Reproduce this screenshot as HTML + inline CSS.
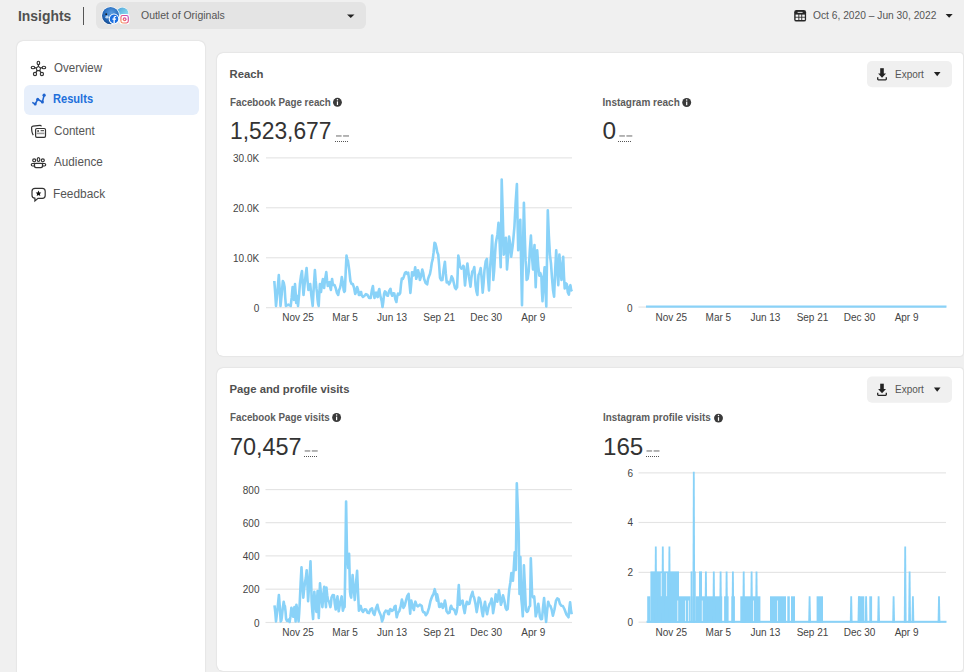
<!DOCTYPE html>
<html><head><meta charset="utf-8">
<style>
*{box-sizing:border-box;margin:0;padding:0}
html,body{width:964px;height:672px;overflow:hidden;background:#f0f0f0;font-family:"Liberation Sans",sans-serif;color:#1c1e21}
.abs{position:absolute}
.t{position:absolute;white-space:nowrap;line-height:1;z-index:3}
#sidebar{position:absolute;left:16.5px;top:40.5px;width:188.5px;height:700px;background:#fff;border-radius:6px;box-shadow:0 0 1.5px rgba(0,0,0,.2)}
.card{position:absolute;left:216.8px;width:746px;background:#fff;border-radius:6px 3px 3px 6px;box-shadow:0 0 1.5px rgba(0,0,0,.2)}
.navt{font-size:12px;color:#555;transform-origin:0 0}
.sel{position:absolute;left:23.5px;top:85.3px;width:175.5px;height:29.5px;background:#e7effb;border-radius:6px}
.h{font-size:11px;font-weight:bold;color:#505050;transform-origin:0 0}
.sub{font-size:10px;font-weight:bold;color:#5c5c5c;transform-origin:0 0}
.big{font-size:24.4px;color:#333;transform-origin:0 0}
.ax{font-size:10px;color:#444}
svg{position:absolute;left:0;top:0;z-index:2}
</style></head><body>
<div class="t" style="left:17.7px;top:7.9px;font-size:15.2px;font-weight:bold;color:#505050;transform-origin:0 0;transform:scaleX(0.915)">Insights</div>
<div class="abs" style="left:83px;top:7px;width:1px;height:18px;background:#555"></div>
<div class="abs" style="left:96px;top:2px;width:270px;height:26.6px;background:#e4e4e4;border-radius:6px"></div>
<div class="t" style="left:141px;top:9.5px;font-size:11.5px;color:#555;transform-origin:0 0;transform:scaleX(0.91)">Outlet of Originals</div>
<div class="t" style="left:812.5px;top:9.8px;font-size:11px;color:#555;transform-origin:0 0;transform:scaleX(0.93)">Oct 6, 2020 – Jun 30, 2022</div>

<div id="sidebar"></div>
<div class="sel"></div>
<div class="t navt" style="left:53.7px;top:61.7px;transform:scaleX(0.96)">Overview</div>
<div class="t navt" style="left:53.2px;top:92.9px;font-weight:bold;color:#216fdb;transform:scaleX(0.924)">Results</div>
<div class="t navt" style="left:54px;top:124.9px;transform:scaleX(0.97)">Content</div>
<div class="t navt" style="left:54px;top:155.7px;transform:scaleX(0.974)">Audience</div>
<div class="t navt" style="left:53.3px;top:187.8px;transform:scaleX(0.99)">Feedback</div>

<div class="card" style="top:52.5px;height:303.5px"></div>
<div class="card" style="top:368px;height:302.5px"></div>

<div class="t h" style="left:229.5px;top:68.7px;font-size:11.3px">Reach</div>
<div class="t sub" style="left:229.5px;top:98px;transform:scaleX(0.98)">Facebook Page reach</div>
<div class="t big" style="left:230px;top:119.1px;transform:scaleX(0.935)">1,523,677</div>
<div class="t sub" style="left:602.5px;top:98px">Instagram reach</div>
<div class="t big" style="left:602.5px;top:119.1px">0</div>

<div class="t h" style="left:229.5px;top:383.6px;font-size:11.3px">Page and profile visits</div>
<div class="t sub" style="left:229.5px;top:412.8px;transform:scaleX(0.98)">Facebook Page visits</div>
<div class="t big" style="left:230px;top:434.6px;transform:scaleX(0.96)">70,457</div>
<div class="t sub" style="left:602.5px;top:412.8px;transform:scaleX(0.985)">Instagram profile visits</div>
<div class="t big" style="left:602.5px;top:434.6px;transform:scaleX(0.99)">165</div>

<div class="t" style="left:895px;top:68.7px;font-size:10.5px;color:#555;transform-origin:0 0;transform:scaleX(0.95)">Export</div>
<div class="t" style="left:895px;top:384.2px;font-size:10.5px;color:#555;transform-origin:0 0;transform:scaleX(0.95)">Export</div>

<div class="t ax" style="left:258.0px;top:313.0px;width:80px;text-align:center">Nov 25</div>
<div class="t ax" style="left:305.1px;top:313.0px;width:80px;text-align:center">Mar 5</div>
<div class="t ax" style="left:352.1px;top:313.0px;width:80px;text-align:center">Jun 13</div>
<div class="t ax" style="left:399.2px;top:313.0px;width:80px;text-align:center">Sep 21</div>
<div class="t ax" style="left:446.2px;top:313.0px;width:80px;text-align:center">Dec 30</div>
<div class="t ax" style="left:493.3px;top:313.0px;width:80px;text-align:center">Apr 9</div>
<div class="t ax" style="left:631.3px;top:313.0px;width:80px;text-align:center">Nov 25</div>
<div class="t ax" style="left:678.4px;top:313.0px;width:80px;text-align:center">Mar 5</div>
<div class="t ax" style="left:725.4px;top:313.0px;width:80px;text-align:center">Jun 13</div>
<div class="t ax" style="left:772.5px;top:313.0px;width:80px;text-align:center">Sep 21</div>
<div class="t ax" style="left:819.5px;top:313.0px;width:80px;text-align:center">Dec 30</div>
<div class="t ax" style="left:866.6px;top:313.0px;width:80px;text-align:center">Apr 9</div>
<div class="t ax" style="left:258.0px;top:628.0px;width:80px;text-align:center">Nov 25</div>
<div class="t ax" style="left:305.1px;top:628.0px;width:80px;text-align:center">Mar 5</div>
<div class="t ax" style="left:352.1px;top:628.0px;width:80px;text-align:center">Jun 13</div>
<div class="t ax" style="left:399.2px;top:628.0px;width:80px;text-align:center">Sep 21</div>
<div class="t ax" style="left:446.2px;top:628.0px;width:80px;text-align:center">Dec 30</div>
<div class="t ax" style="left:493.3px;top:628.0px;width:80px;text-align:center">Apr 9</div>
<div class="t ax" style="left:631.3px;top:628.0px;width:80px;text-align:center">Nov 25</div>
<div class="t ax" style="left:678.4px;top:628.0px;width:80px;text-align:center">Mar 5</div>
<div class="t ax" style="left:725.4px;top:628.0px;width:80px;text-align:center">Jun 13</div>
<div class="t ax" style="left:772.5px;top:628.0px;width:80px;text-align:center">Sep 21</div>
<div class="t ax" style="left:819.5px;top:628.0px;width:80px;text-align:center">Dec 30</div>
<div class="t ax" style="left:866.6px;top:628.0px;width:80px;text-align:center">Apr 9</div>
<div class="t ax" style="left:199.2px;top:153.5px;width:60px;text-align:right">30.0K</div>
<div class="t ax" style="left:199.2px;top:203.5px;width:60px;text-align:right">20.0K</div>
<div class="t ax" style="left:199.2px;top:253.5px;width:60px;text-align:right">10.0K</div>
<div class="t ax" style="left:199.2px;top:303.5px;width:60px;text-align:right">0</div>
<div class="t ax" style="left:572.5px;top:303.5px;width:60px;text-align:right">0</div>
<div class="t ax" style="left:199.5px;top:485.5px;width:60px;text-align:right">800</div>
<div class="t ax" style="left:199.5px;top:518.5px;width:60px;text-align:right">600</div>
<div class="t ax" style="left:199.5px;top:551.8px;width:60px;text-align:right">400</div>
<div class="t ax" style="left:199.5px;top:585.0px;width:60px;text-align:right">200</div>
<div class="t ax" style="left:199.5px;top:618.5px;width:60px;text-align:right">0</div>
<div class="t ax" style="left:573.0px;top:468.8px;width:60px;text-align:right">6</div>
<div class="t ax" style="left:573.0px;top:518.3px;width:60px;text-align:right">4</div>
<div class="t ax" style="left:573.0px;top:568.0px;width:60px;text-align:right">2</div>
<div class="t ax" style="left:573.0px;top:618.0px;width:60px;text-align:right">0</div>

<svg width="964" height="672" viewBox="0 0 964 672">
<!-- header icons -->
<defs>
<linearGradient id="av2" x1="0" y1="0" x2="1" y2="1"><stop offset="0" stop-color="#4aa0d8"/><stop offset="0.6" stop-color="#7fd0ea"/><stop offset="1" stop-color="#b5e6f2"/></linearGradient>
<radialGradient id="av1" cx="0.55" cy="0.35" r="0.75"><stop offset="0" stop-color="#5d9fe0"/><stop offset="0.55" stop-color="#2a6fc0"/><stop offset="1" stop-color="#0f3f80"/></radialGradient>
<linearGradient id="ig" x1="0" y1="1" x2="1" y2="0"><stop offset="0" stop-color="#f7a35c"/><stop offset="0.5" stop-color="#e8507a"/><stop offset="1" stop-color="#b84fc9"/></linearGradient>
</defs>
<circle cx="122.4" cy="13.6" r="6.6" fill="#fff" opacity="0.8"/>
<circle cx="122.4" cy="13.6" r="6.0" fill="url(#av2)"/>
<circle cx="110.6" cy="15.7" r="9.3" fill="#fff"/>
<circle cx="110.6" cy="15.7" r="8.6" fill="url(#av1)"/>
<path d="M105 17.5 Q106 15 108 15.6 L109 17.5 Q107 19.5 105 17.5 Z" fill="#dfeefa" opacity="0.8"/>
<circle cx="106.2" cy="14.2" r="0.9" fill="#1a1a1a"/>
<circle cx="114" cy="18.9" r="5.3" fill="#fff"/>
<circle cx="114" cy="18.9" r="4.3" fill="#1a6fe0"/>
<path d="M114.8 23.2 V19.7 H116 L116.2 18.5 H114.8 V17.7 Q114.8 17.1 115.5 17.1 H116.2 V16 H115.2 Q113.5 16 113.5 17.6 V18.5 H112.4 V19.7 H113.5 V23.2 Z" fill="#fff"/>
<rect x="119.5" y="14.1" width="10.1" height="10.2" rx="2.6" fill="#fff"/>
<rect x="120.9" y="15.5" width="7.4" height="7.5" rx="1.9" fill="none" stroke="url(#ig)" stroke-width="1.15"/>
<circle cx="124.6" cy="19.25" r="1.9" fill="url(#ig)"/>
<circle cx="124.6" cy="19.25" r="0.75" fill="#fff"/>
<polygon points="347,14.4 354.5,14.4 350.75,18" fill="#222"/>
<!-- calendar -->
<rect x="794.2" y="10" width="11.9" height="11.6" rx="2.2" fill="#262626"/>
<rect x="797.6" y="11.9" width="5" height="1" fill="#ddd"/>
<rect x="795.6" y="14.6" width="2.8" height="2.2" fill="#f4f4f4"/><rect x="799.3" y="14.6" width="2" height="2.2" fill="#f4f4f4"/><rect x="802.2" y="14.6" width="2.6" height="2.2" fill="#f4f4f4"/>
<rect x="795.6" y="17.6" width="2.8" height="2.4" fill="#f4f4f4"/><rect x="799.3" y="17.6" width="2" height="2.4" fill="#f4f4f4"/><rect x="802.2" y="17.6" width="2.6" height="2.4" fill="#f4f4f4"/>
<polygon points="945.6,13.9 952.7,13.9 949.15,17.8" fill="#222"/>
<!-- nav icons -->
<g fill="none" stroke="#333" stroke-width="1.15">
<polygon points="38.4,66.4 40.6,68 39.8,70.6 37,70.6 36.2,68"/>
<line x1="38.4" y1="66.4" x2="38.4" y2="64.6"/><line x1="40.6" y1="68" x2="42.4" y2="67.6"/><line x1="36.2" y1="68" x2="34.5" y2="67.6"/><line x1="39.8" y1="70.6" x2="40.9" y2="72.6"/><line x1="37" y1="70.6" x2="35.9" y2="72.6"/>
<ellipse cx="38.4" cy="62.9" rx="1.3" ry="1.7"/><ellipse cx="33" cy="67.5" rx="1.8" ry="1.3"/><ellipse cx="43.9" cy="67.5" rx="1.8" ry="1.3"/><circle cx="35" cy="74" r="1.6"/><circle cx="41.9" cy="74" r="1.6"/>
</g>
<g>
<polyline points="32.3,102.4 35.2,104.1 37.7,99.3 42.4,102 44.1,95.2" fill="none" stroke="#1f64cf" stroke-width="1.5"/>
<circle cx="35.2" cy="104.1" r="1.5" fill="#1f64cf"/><circle cx="37.7" cy="99.3" r="1.5" fill="#1f64cf"/><circle cx="42.4" cy="102" r="1.5" fill="#1f64cf"/><circle cx="44.1" cy="95.2" r="1.6" fill="#1f64cf"/>
</g>
<g fill="none" stroke="#333" stroke-width="1.2">
<path d="M33.3 135.2 Q31.6 133 31.6 127.6 Q31.6 126.4 33 126.2 L40 125.4 Q41.2 125.3 41.4 126.4"/>
<rect x="35.6" y="128.5" width="9.9" height="8.8" rx="1.3"/>
</g>
<circle cx="38.1" cy="131" r="0.9" fill="#333"/><rect x="40.6" y="130.2" width="3.4" height="1" fill="#333"/><rect x="36.6" y="132.6" width="7.8" height="1.6" fill="#999"/>
<g fill="none" stroke="#333" stroke-width="1.2">
<circle cx="34.2" cy="160.3" r="1.5"/><ellipse cx="38.5" cy="159.6" rx="1.3" ry="1.9"/><circle cx="42.8" cy="160.3" r="1.5"/>
<path d="M35.5 163.5 H32.5 Q31.3 163.5 31.3 164.8 Q31.3 166 32.5 166 H35.2"/>
<path d="M41.5 163.5 H44.5 Q45.7 163.5 45.7 164.8 Q45.7 166 44.5 166 H41.8"/>
<path d="M35.8 163.4 H41.2 Q42.7 163.4 42.7 165 Q42.7 167.6 41 167.6 H36 Q34.3 167.6 34.3 165 Q34.3 163.4 35.8 163.4 Z"/>
</g>
<g fill="none" stroke="#333" stroke-width="1.2">
<path d="M35 188.3 H42.3 Q45.2 188.3 45.2 191.2 V195.5 Q45.2 198.3 42.3 198.3 H38 L34.9 201 V198.2 Q32 198 32 195.3 V191.2 Q32 188.3 35 188.3 Z"/>
</g>
<polygon points="38.5,190.6 39.4,192.4 41.3,192.6 39.9,193.9 40.3,195.9 38.5,194.9 36.7,195.9 37.1,193.9 35.7,192.6 37.6,192.4" fill="#111"/>

<rect x="266" y="157.3" width="306" height="1.15" fill="#e4e4e4"/>
<rect x="266" y="207.2" width="306" height="1.15" fill="#e4e4e4"/>
<rect x="266" y="257.2" width="306" height="1.15" fill="#e4e4e4"/>
<rect x="266" y="307.1" width="306" height="1.15" fill="#e4e4e4"/>
<rect x="638.5" y="306.5" width="307.5" height="1.15" fill="#e4e4e4"/>
<rect x="265.5" y="489" width="306.5" height="1.15" fill="#e4e4e4"/>
<rect x="265.5" y="522.1" width="306.5" height="1.15" fill="#e4e4e4"/>
<rect x="265.5" y="555.3" width="306.5" height="1.15" fill="#e4e4e4"/>
<rect x="265.5" y="588.6" width="306.5" height="1.15" fill="#e4e4e4"/>
<rect x="265.5" y="621.9" width="306.5" height="1.15" fill="#e4e4e4"/>
<rect x="638.5" y="472.3" width="307.5" height="1.15" fill="#e4e4e4"/>
<rect x="638.5" y="521.9" width="307.5" height="1.15" fill="#e4e4e4"/>
<rect x="638.5" y="571.8" width="307.5" height="1.15" fill="#e4e4e4"/>
<rect x="638.5" y="621.6" width="307.5" height="1.15" fill="#e4e4e4"/>
<polyline points="274.30,281.00 275.15,292.10 276.00,306.00 277.40,291.90 278.80,275.00 279.65,289.10 280.50,306.00 281.65,294.90 282.80,281.00 283.70,282.60 284.60,287.00 285.25,297.90 285.90,306.00 288.30,304.60 290.70,306.00 291.65,297.90 292.60,287.00 293.30,292.10 294.00,300.00 294.50,293.40 295.00,284.00 295.60,292.10 296.20,303.00 296.80,300.90 297.40,296.00 297.70,299.60 298.00,306.00 298.95,296.40 299.90,284.00 300.95,276.10 302.00,271.00 302.75,284.40 303.50,295.00 305.05,280.10 306.60,268.00 307.50,280.40 308.40,290.00 309.30,285.60 310.20,284.00 311.45,296.40 312.70,306.00 313.80,286.60 314.90,270.00 315.70,280.90 316.50,289.00 317.00,292.60 317.50,299.00 318.10,303.90 318.70,306.00 319.30,293.60 319.90,284.00 320.45,289.40 321.00,292.00 321.95,284.10 322.90,279.00 323.50,284.90 324.10,288.00 325.20,278.60 326.30,272.00 327.05,280.40 327.80,286.00 328.70,282.60 329.60,282.00 330.25,287.40 330.90,290.00 331.50,283.10 332.10,279.00 332.70,283.40 333.30,285.00 334.50,285.10 335.70,288.00 336.95,292.90 338.20,295.00 339.10,290.10 340.00,288.00 340.90,283.90 341.80,277.00 342.75,282.10 343.70,290.00 344.30,291.90 344.90,291.00 345.70,271.90 346.50,255.60 347.20,259.45 347.90,260.50 349.15,269.35 350.40,281.00 351.60,283.90 352.80,284.00 354.00,287.60 355.20,294.00 356.15,291.90 357.10,287.00 358.00,289.60 358.90,295.00 359.80,294.90 360.70,292.00 361.15,292.10 361.60,295.00 362.95,296.90 364.30,296.00 365.90,294.10 367.50,295.00 369.10,297.90 370.70,298.00 371.80,290.60 372.90,286.00 373.70,293.40 374.50,298.00 375.30,293.85 376.10,292.50 376.90,296.15 377.70,297.00 378.50,291.60 379.30,289.00 380.10,294.90 380.90,298.00 381.70,301.10 382.50,307.00 383.30,301.70 384.10,293.60 384.90,291.40 385.70,292.00 386.80,295.25 387.90,295.70 389.20,290.85 390.50,288.80 391.35,293.65 392.20,295.70 393.25,293.25 394.30,293.60 395.35,299.20 396.40,302.00 397.20,296.40 398.00,293.60 399.10,294.70 400.20,293.00 401.00,284.40 401.80,278.60 402.85,278.90 403.90,276.40 405.00,272.90 406.10,272.20 407.15,273.85 408.20,272.70 409.30,281.45 410.40,293.00 411.20,284.00 412.00,272.20 412.80,272.40 413.60,275.40 414.40,272.75 415.20,267.30 415.70,271.65 416.20,278.80 417.10,275.90 418.00,270.20 418.95,273.70 419.90,280.00 421.10,276.20 422.30,269.60 423.20,272.80 424.10,278.80 425.65,282.95 427.20,284.30 428.10,278.90 429.00,276.30 429.95,274.05 430.90,269.00 431.80,262.75 432.70,259.30 433.60,252.45 434.50,242.80 435.40,243.55 436.30,247.10 437.25,252.15 438.20,254.40 439.10,264.60 440.00,277.60 441.20,280.20 442.40,280.00 443.65,269.45 444.90,261.70 445.80,273.45 446.70,282.40 447.90,281.95 449.10,284.30 450.35,281.70 451.60,276.30 452.80,278.60 454.00,283.70 454.95,287.80 455.90,289.10 456.50,286.80 457.10,287.30 457.70,272.85 458.30,255.60 459.20,259.70 460.10,266.60 461.35,268.60 462.60,267.80 463.20,265.80 463.80,266.60 464.40,277.45 465.00,285.50 466.20,273.10 467.40,263.50 468.95,276.50 470.50,286.70 471.40,277.70 472.30,271.50 473.30,270.65 474.30,267.00 474.90,274.60 475.50,285.00 476.45,291.40 477.40,295.00 477.95,283.60 478.50,275.00 479.60,272.90 480.70,268.00 481.70,278.90 482.70,292.60 483.60,282.70 484.50,270.00 485.70,261.32 486.90,258.80 487.95,277.73 489.00,290.50 489.75,273.17 490.50,262.00 491.35,251.83 492.20,235.50 492.75,254.67 493.30,280.00 494.15,270.58 495.00,255.00 495.70,244.32 496.40,239.80 497.45,234.43 498.50,222.90 499.60,242.02 500.70,267.30 501.20,226.48 501.70,179.50 502.75,213.97 503.80,254.60 504.85,249.23 505.90,237.70 506.45,250.47 507.00,269.40 508.05,256.08 509.10,236.60 510.15,243.57 511.20,256.70 512.80,244.93 514.40,227.00 515.65,202.42 516.90,184.00 517.55,220.23 518.20,250.30 519.25,231.92 520.30,219.70 521.15,265.58 522.00,305.30 522.95,250.97 523.90,202.80 524.75,234.93 525.60,260.90 526.10,267.37 526.60,280.00 527.65,278.83 528.70,271.50 529.80,250.42 530.90,235.50 531.95,255.53 533.00,269.40 533.75,254.12 534.50,245.00 535.10,269.23 535.70,287.30 536.45,265.72 537.20,250.30 538.25,266.08 539.30,275.70 540.35,273.17 541.40,276.80 541.95,292.03 542.50,301.10 543.55,281.12 544.60,267.30 545.45,289.93 546.30,306.40 547.05,255.22 547.80,210.20 548.85,235.48 549.90,254.60 550.95,263.12 552.00,277.80 553.05,290.38 554.10,296.80 555.15,270.47 556.20,250.30 557.25,270.83 558.30,285.20 558.85,266.82 559.40,254.60 560.45,270.38 561.50,280.00 562.35,265.27 563.20,256.70 563.95,275.63 564.70,288.40 565.75,283.22 566.80,284.20 567.85,292.53 568.90,294.70 569.65,286.87 570.40,285.20 571.25,290.38 572.10,289.40" fill="none" stroke="#89d2f8" stroke-width="2.6" stroke-linejoin="round"/>
<rect x="646" y="305.5" width="300.5" height="2.2" fill="#89d2f8"/>
<polyline points="274.50,605.40 275.25,612.00 276.00,621.40 277.45,609.60 278.90,595.00 279.80,606.80 280.70,621.40 281.30,620.45 281.90,616.70 282.80,607.85 283.70,601.80 284.30,605.30 284.90,606.00 285.50,611.10 286.10,619.00 287.00,621.00 287.90,620.20 288.75,619.70 289.60,622.00 290.50,616.25 291.40,607.70 292.30,610.80 293.20,616.70 293.80,613.30 294.40,607.10 295.00,612.85 295.60,621.40 296.00,614.50 296.40,604.80 297.50,611.70 298.60,621.40 299.20,612.70 299.80,601.20 300.65,582.85 301.50,567.30 302.40,583.85 303.30,597.60 304.20,588.45 305.10,582.10 305.90,577.55 306.70,570.20 307.40,584.30 308.10,601.20 309.30,582.65 310.50,561.30 311.10,580.45 311.70,602.40 312.40,612.10 313.10,619.00 313.70,603.95 314.30,591.70 315.35,603.20 316.40,611.90 317.00,600.10 317.60,591.10 318.20,605.90 318.80,617.90 319.40,599.20 320.00,583.30 321.20,596.60 322.40,607.10 323.30,595.60 324.20,586.90 325.10,598.40 326.00,607.10 326.20,595.90 326.40,587.50 327.20,595.15 328.00,600.00 329.20,602.15 330.40,607.10 330.95,603.75 331.50,597.60 332.70,595.00 333.90,595.20 334.80,603.75 335.70,609.50 336.60,601.55 337.50,596.40 338.10,605.25 338.70,611.30 340.20,602.45 341.70,596.40 342.30,604.95 342.90,610.70 343.75,607.50 344.60,607.10 345.00,584.95 345.40,560.00 345.75,529.35 346.10,501.50 346.55,529.00 347.00,553.70 347.60,559.40 348.20,567.90 348.65,562.20 349.10,553.70 349.55,571.30 350.00,591.70 350.60,596.05 351.20,597.60 351.90,584.90 352.60,575.00 353.70,588.90 354.80,600.00 355.95,584.00 357.10,570.80 358.00,592.15 358.90,610.70 359.80,606.95 360.70,606.00 361.90,610.35 363.10,611.90 364.60,609.30 366.10,609.50 367.55,612.70 369.00,613.10 370.50,609.30 372.00,608.30 373.20,613.00 374.40,614.90 375.90,608.45 377.40,604.80 378.60,610.35 379.80,613.10 380.95,615.85 382.10,621.40 383.15,618.65 384.20,613.10 385.75,610.65 387.30,611.00 388.10,614.00 388.90,614.20 389.65,610.20 390.40,609.00 391.95,610.90 393.50,610.00 394.55,606.50 395.60,605.80 396.15,612.95 396.70,617.30 398.00,612.75 399.30,611.00 400.60,606.70 401.90,599.60 402.65,602.35 403.40,607.90 404.70,605.65 406.00,600.60 407.30,595.85 408.60,593.90 409.40,605.15 410.20,613.60 410.75,605.70 411.30,600.60 412.60,606.70 413.90,610.00 414.65,604.45 415.40,601.70 416.70,605.45 418.00,606.40 419.85,604.70 421.70,605.80 422.45,610.35 423.20,612.10 424.50,612.25 425.80,615.20 427.40,612.95 429.00,607.90 430.55,600.80 432.10,596.50 433.40,594.25 434.70,589.20 435.75,593.50 436.80,600.60 436.95,598.90 437.10,594.40 438.15,599.25 439.20,606.90 440.25,606.70 441.30,603.70 442.05,604.40 442.80,607.90 443.85,605.65 444.90,600.60 445.70,604.40 446.50,611.00 448.05,613.20 449.60,612.60 450.35,607.80 451.10,605.80 452.15,608.80 453.20,609.00 454.50,610.20 455.80,614.20 456.60,611.95 457.40,606.90 458.10,594.55 458.80,585.00 459.40,596.30 460.00,604.80 461.30,601.30 462.60,600.60 463.65,608.25 464.70,613.10 465.75,606.00 466.80,601.70 468.10,604.10 469.40,603.70 470.95,596.35 472.50,591.80 473.30,596.05 474.10,597.50 475.40,603.40 476.70,612.10 477.75,606.20 478.80,597.50 479.80,598.70 480.80,602.70 481.85,610.90 482.90,616.30 483.95,607.60 485.00,601.70 486.05,609.35 487.10,614.20 488.40,607.55 489.70,603.70 490.65,602.50 491.60,598.50 492.35,604.40 493.10,613.10 494.40,605.15 495.70,594.40 496.50,596.65 497.30,601.70 498.10,597.35 498.90,590.20 499.90,596.10 500.90,604.80 501.95,601.50 503.00,595.40 504.30,600.25 505.60,607.90 506.65,609.85 507.70,609.00 508.50,597.70 509.30,589.20 510.35,582.50 511.40,573.00 512.15,575.50 512.90,580.80 513.80,567.95 514.70,552.30 515.25,559.75 515.80,570.00 516.30,528.05 516.80,483.30 517.75,507.00 518.70,533.50 519.10,565.15 519.50,594.00 519.95,574.10 520.40,557.00 520.85,579.15 521.30,598.50 522.05,606.00 522.80,616.30 523.35,592.15 523.90,565.20 524.90,586.20 525.90,610.00 526.95,611.90 528.00,611.00 529.05,607.00 530.10,605.80 530.45,583.45 530.80,558.30 531.45,575.45 532.10,595.40 533.15,597.35 534.20,596.50 534.95,605.00 535.70,616.30 537.00,611.40 538.30,603.70 539.10,608.85 539.90,616.80 540.95,619.25 542.00,618.90 543.05,607.05 544.10,598.00 545.10,611.40 546.10,622.00 547.15,610.45 548.20,601.70 549.25,605.15 550.30,605.80 551.60,609.35 552.90,615.70 554.45,609.55 556.00,600.60 557.30,598.45 558.60,599.10 559.95,603.85 561.30,605.80 562.85,606.00 564.40,609.00 566.45,614.55 568.50,617.30 569.30,608.35 570.10,602.20 570.90,609.60 571.70,614.20" fill="none" stroke="#89d2f8" stroke-width="2.6" stroke-linejoin="round"/>
<rect x="646.5" y="620.8" width="300" height="2" fill="#89d2f8"/>
<rect x="647.2" y="596.3" width="3.2" height="26.5" fill="#89d2f8"/>
<rect x="650.4" y="571.4" width="28.6" height="51.4" fill="#89d2f8"/>
<rect x="679" y="596.3" width="11.6" height="26.5" fill="#89d2f8"/>
<rect x="690.6" y="571.4" width="1.9" height="51.4" fill="#89d2f8"/>
<rect x="692.5" y="596.3" width="1.9" height="26.5" fill="#89d2f8"/>
<rect x="694.4" y="571.4" width="1.3" height="51.4" fill="#89d2f8"/>
<rect x="695.7" y="596.3" width="3.3" height="26.5" fill="#89d2f8"/>
<rect x="699" y="571.4" width="3.0" height="51.4" fill="#89d2f8"/>
<rect x="702" y="596.3" width="20.2" height="26.5" fill="#89d2f8"/>
<rect x="724.1" y="596.3" width="4.5" height="26.5" fill="#89d2f8"/>
<rect x="731.4" y="596.3" width="3.5" height="26.5" fill="#89d2f8"/>
<rect x="740.3" y="596.3" width="20.1" height="26.5" fill="#89d2f8"/>
<rect x="770" y="596.3" width="16.0" height="26.5" fill="#89d2f8"/>
<rect x="787.3" y="596.3" width="2.5" height="26.5" fill="#89d2f8"/>
<rect x="791" y="596.3" width="4.0" height="26.5" fill="#89d2f8"/>
<rect x="816.6" y="596.3" width="6.4" height="26.5" fill="#89d2f8"/>
<rect x="858.6" y="596.3" width="5.7" height="26.5" fill="#89d2f8"/>
<rect x="869.3" y="596.3" width="2.8" height="26.5" fill="#89d2f8"/>
<polygon points="654.4,622.8 654.90,546.5 656.70,546.5 657.2,622.8" fill="#89d2f8"/>
<polygon points="661.4,622.8 661.90,546.5 663.70,546.5 664.2,622.8" fill="#89d2f8"/>
<polygon points="668.0,622.8 668.50,546.5 670.30,546.5 670.8,622.8" fill="#89d2f8"/>
<polygon points="692.4,622.8 692.90,471.8 694.70,471.8 695.2,622.8" fill="#89d2f8"/>
<polygon points="704.5,622.8 705.00,571.4 706.80,571.4 707.3,622.8" fill="#89d2f8"/>
<polygon points="712.4,622.8 712.90,571.4 714.70,571.4 715.2,622.8" fill="#89d2f8"/>
<polygon points="719.2,622.8 719.70,571.4 721.50,571.4 722.0,622.8" fill="#89d2f8"/>
<polygon points="725.2,622.8 725.70,571.4 727.50,571.4 728.0,622.8" fill="#89d2f8"/>
<polygon points="731.5,622.8 732.00,571.4 733.80,571.4 734.3,622.8" fill="#89d2f8"/>
<polygon points="742.3,622.8 742.80,571.4 744.60,571.4 745.1,622.8" fill="#89d2f8"/>
<polygon points="750.2,622.8 750.70,571.4 752.50,571.4 753.0,622.8" fill="#89d2f8"/>
<polygon points="755.1,622.8 755.60,571.4 757.40,571.4 757.9,622.8" fill="#89d2f8"/>
<polygon points="808.2,622.8 808.70,596.3 810.50,596.3 811.0,622.8" fill="#89d2f8"/>
<polygon points="849.8,622.8 850.30,596.3 852.10,596.3 852.6,622.8" fill="#89d2f8"/>
<polygon points="857.5,622.8 858.00,596.3 859.80,596.3 860.3,622.8" fill="#89d2f8"/>
<polygon points="864.7,622.8 865.20,596.3 867.00,596.3 867.5,622.8" fill="#89d2f8"/>
<polygon points="877.2,622.8 877.70,596.3 879.50,596.3 880.0,622.8" fill="#89d2f8"/>
<polygon points="892.2,622.8 892.70,596.3 894.50,596.3 895.0,622.8" fill="#89d2f8"/>
<polygon points="903.8,622.8 904.30,546.5 906.10,546.5 906.6,622.8" fill="#89d2f8"/>
<polygon points="908.2,622.8 908.70,571.4 910.50,571.4 911.0,622.8" fill="#89d2f8"/>
<polygon points="911.5,622.8 912.00,596.3 913.80,596.3 914.3,622.8" fill="#89d2f8"/>
<polygon points="937.6,622.8 938.10,596.3 939.90,596.3 940.4,622.8" fill="#89d2f8"/>
<rect x="660.85" y="573.1" width="0.7" height="23.1" fill="#fff"/>
<rect x="666.35" y="573.1" width="0.7" height="23.1" fill="#fff"/>
<rect x="677.45" y="600.5" width="0.7" height="20.6" fill="#fff"/>
<rect x="685.15" y="600.5" width="0.7" height="20.6" fill="#fff"/>
<rect x="688.35" y="600.5" width="0.7" height="20.6" fill="#fff"/>
<rect x="701.85" y="600.5" width="0.7" height="20.6" fill="#fff"/>
<rect x="753.25" y="600.5" width="0.7" height="20.6" fill="#fff"/>
<rect x="777.25" y="600.5" width="0.7" height="20.6" fill="#fff"/>
<circle cx="337.45" cy="102.3" r="4.45" fill="#3a3a3a"/><circle cx="337.45" cy="99.70" r="0.75" fill="#fff"/><rect x="336.85" y="101.40" width="1.2" height="3.6" fill="#fff"/>
<circle cx="686.7" cy="102.5" r="4.45" fill="#3a3a3a"/><circle cx="686.7" cy="99.90" r="0.75" fill="#fff"/><rect x="686.10" y="101.60" width="1.2" height="3.6" fill="#fff"/>
<circle cx="336.6" cy="417.5" r="4.45" fill="#3a3a3a"/><circle cx="336.6" cy="414.90" r="0.75" fill="#fff"/><rect x="336.00" y="416.60" width="1.2" height="3.6" fill="#fff"/>
<circle cx="718.5" cy="418.1" r="4.45" fill="#3a3a3a"/><circle cx="718.5" cy="415.50" r="0.75" fill="#fff"/><rect x="717.90" y="417.20" width="1.2" height="3.6" fill="#fff"/>
<rect x="336" y="135.1" width="5.6" height="1.7" fill="#a8a8a8"/><rect x="343.1" y="135.1" width="5.9" height="1.7" fill="#a8a8a8"/><rect x="335" y="141" width="1" height="1" fill="#555"/><rect x="337" y="141" width="1" height="1" fill="#555"/><rect x="339" y="141" width="1" height="1" fill="#555"/><rect x="341" y="141" width="1" height="1" fill="#555"/><rect x="343" y="141" width="1" height="1" fill="#555"/><rect x="345" y="141" width="1" height="1" fill="#555"/><rect x="347" y="141" width="1" height="1" fill="#555"/>
<rect x="619.3" y="135.1" width="5.6" height="1.7" fill="#a8a8a8"/><rect x="626.4" y="135.1" width="5.9" height="1.7" fill="#a8a8a8"/><rect x="618" y="141" width="1" height="1" fill="#555"/><rect x="620" y="141" width="1" height="1" fill="#555"/><rect x="622" y="141" width="1" height="1" fill="#555"/><rect x="624" y="141" width="1" height="1" fill="#555"/><rect x="626" y="141" width="1" height="1" fill="#555"/><rect x="628" y="141" width="1" height="1" fill="#555"/><rect x="630" y="141" width="1" height="1" fill="#555"/>
<rect x="304.7" y="450.1" width="5.6" height="1.7" fill="#a8a8a8"/><rect x="311.8" y="450.1" width="5.9" height="1.7" fill="#a8a8a8"/><rect x="304" y="456" width="1" height="1" fill="#555"/><rect x="306" y="456" width="1" height="1" fill="#555"/><rect x="308" y="456" width="1" height="1" fill="#555"/><rect x="310" y="456" width="1" height="1" fill="#555"/><rect x="312" y="456" width="1" height="1" fill="#555"/><rect x="314" y="456" width="1" height="1" fill="#555"/><rect x="316" y="456" width="1" height="1" fill="#555"/>
<rect x="646.5" y="450.1" width="5.6" height="1.7" fill="#a8a8a8"/><rect x="653.6" y="450.1" width="5.9" height="1.7" fill="#a8a8a8"/><rect x="646" y="456" width="1" height="1" fill="#555"/><rect x="648" y="456" width="1" height="1" fill="#555"/><rect x="650" y="456" width="1" height="1" fill="#555"/><rect x="652" y="456" width="1" height="1" fill="#555"/><rect x="654" y="456" width="1" height="1" fill="#555"/><rect x="656" y="456" width="1" height="1" fill="#555"/><rect x="658" y="456" width="1" height="1" fill="#555"/>
<rect x="867" y="61" width="85" height="26.3" rx="5" fill="#f0f0f0"/><rect x="880.2" y="68.2" width="3.6" height="5.8" fill="#222"/><polygon points="878.1,73.6 886,73.6 882.05,77.7" fill="#222"/><path d="M877.7 77.3 V79.1 Q877.7 79.8 878.4 79.8 H885.6 Q886.3 79.8 886.3 79.1 V77.3" fill="none" stroke="#222" stroke-width="1.3"/><polygon points="933.9,72.0 940.5,72.0 937.2,76.3" fill="#222"/>
<rect x="867" y="376.5" width="85" height="26.3" rx="5" fill="#f0f0f0"/><rect x="880.2" y="383.7" width="3.6" height="5.8" fill="#222"/><polygon points="878.1,389.1 886,389.1 882.05,393.2" fill="#222"/><path d="M877.7 392.8 V394.6 Q877.7 395.3 878.4 395.3 H885.6 Q886.3 395.3 886.3 394.6 V392.8" fill="none" stroke="#222" stroke-width="1.3"/><polygon points="933.9,387.5 940.5,387.5 937.2,391.8" fill="#222"/>
</svg>
</body></html>
